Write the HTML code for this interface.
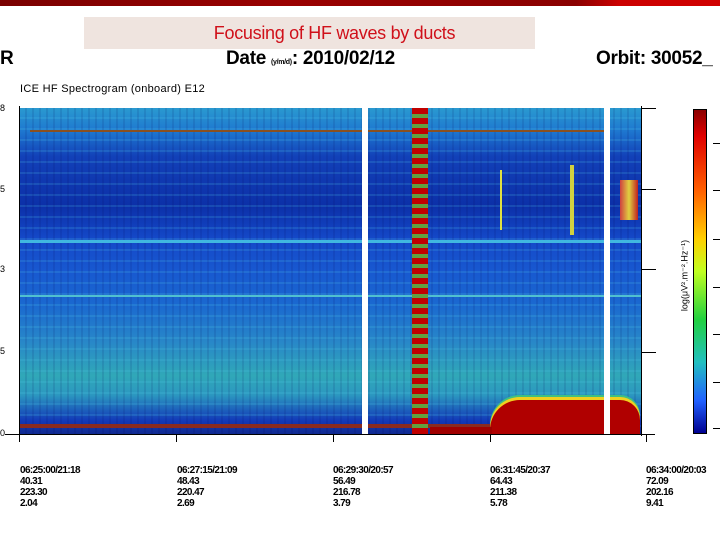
<!DOCTYPE html>
<html><head><style>
body{margin:0;width:720px;height:540px;background:#fff;position:relative;overflow:hidden;font-family:"Liberation Sans",sans-serif}
.a{position:absolute}
.t{font-size:10px;font-weight:bold;line-height:11px;letter-spacing:-0.6px}
</style></head><body>
<div class="a" style="left:0;top:0;width:720px;height:6px;background:linear-gradient(90deg,#7a0000,#9a0000 40%,#8a0000 80%,#cc0000 86%,#d00000)"></div>
<div class="a" style="left:84px;top:17px;width:451px;height:32px;background:#efe4df"></div>
<div class="a" style="left:84px;top:23px;width:451px;text-align:center;color:#d0101a;font-size:18px;padding-left:50px;box-sizing:border-box;letter-spacing:-0.3px">Focusing of HF waves by ducts</div>
<div class="a" style="left:0;top:48px;font-size:19px;font-weight:bold">R</div>
<div class="a" style="left:226px;top:48px;font-size:19px;font-weight:bold;letter-spacing:-0.3px">Date <span style="font-size:7px;font-weight:bold">(y/m/d)</span>: 2010/02/12</div>
<div class="a" style="left:596px;top:48px;font-size:19px;font-weight:bold;letter-spacing:-0.3px">Orbit: 30052_</div>
<div class="a" style="left:20px;top:83px;font-size:11px;letter-spacing:0.3px">ICE HF Spectrogram (onboard) E12</div>
<!-- spectrogram -->
<div class="a" style="left:20px;top:108px;width:622px;height:326px;background:linear-gradient(180deg,#2a9ad0 0%,#1e78d0 7%,#1240b8 15%,#0c30a8 30%,#1448c8 40%,#1858d0 50%,#1a68d0 60%,#2888c8 72%,#30a8b8 82%,#2c98c0 88%,#1238b8 96%,#102a90 100%)"></div>
<div class="a" style="left:20px;top:108px;width:622px;height:326px;background:repeating-linear-gradient(180deg,rgba(80,200,230,0) 0 9px,rgba(80,200,230,.3) 9px 11px);opacity:.6"></div>
<div class="a" style="left:20px;top:108px;width:622px;height:326px;background:repeating-linear-gradient(90deg,rgba(0,0,80,0) 0 5px,rgba(0,0,80,.1) 5px 7px)"></div>
<div class="a" style="left:30px;top:130px;width:580px;height:2px;background:#8a5020"></div>
<div class="a" style="left:20px;top:240px;width:622px;height:3px;background:#40b8e0"></div>
<div class="a" style="left:20px;top:295px;width:622px;height:2px;background:#50c0d0"></div>
<div class="a" style="left:20px;top:424px;width:470px;height:4px;background:#8a2a20"></div>
<div class="a" style="left:490px;top:400px;width:150px;height:34px;background:#b00000;border-radius:30px 20px 0 0;box-shadow:0 -3px 0 #f0d020, 0 -5px 0 #40c080"></div>
<div class="a" style="left:430px;top:427px;width:62px;height:7px;background:#a00000"></div>
<div class="a" style="left:412px;top:108px;width:16px;height:326px;background:repeating-linear-gradient(180deg,#c00000 0 6px,#60a040 6px 10px)"></div>
<div class="a" style="left:362px;top:108px;width:6px;height:326px;background:#fff"></div>
<div class="a" style="left:604px;top:108px;width:6px;height:326px;background:#fff"></div>
<div class="a" style="left:500px;top:170px;width:2px;height:60px;background:#e0e040"></div>
<div class="a" style="left:570px;top:165px;width:4px;height:70px;background:#d0d040"></div>
<div class="a" style="left:620px;top:180px;width:18px;height:40px;background:linear-gradient(90deg,#d04040,#e0d040,#c02020)"></div>
<!-- axes -->
<div class="a" style="left:19px;top:106px;width:1px;height:330px;background:#000"></div>
<div class="a" style="left:5px;top:434px;width:650px;height:1px;background:#000"></div>
<div class="a" style="left:641px;top:106px;width:1px;height:330px;background:#000"></div>
<div class="a" style="left:642px;top:108px;width:14px;height:1px;background:#000"></div>
<div class="a" style="left:642px;top:189px;width:14px;height:1px;background:#000"></div>
<div class="a" style="left:642px;top:269px;width:14px;height:1px;background:#000"></div>
<div class="a" style="left:642px;top:352px;width:14px;height:1px;background:#000"></div>
<div class="a" style="left:19px;top:434px;width:1px;height:8px;background:#000"></div>
<div class="a" style="left:176px;top:434px;width:1px;height:8px;background:#000"></div>
<div class="a" style="left:333px;top:434px;width:1px;height:8px;background:#000"></div>
<div class="a" style="left:490px;top:434px;width:1px;height:8px;background:#000"></div>
<div class="a" style="left:646px;top:434px;width:1px;height:8px;background:#000"></div>
<div class="a" style="left:0;top:103px;font-size:9px">8</div>
<div class="a" style="left:0;top:184px;font-size:9px">5</div>
<div class="a" style="left:0;top:264px;font-size:9px">3</div>
<div class="a" style="left:0;top:346px;font-size:9px">5</div>
<div class="a" style="left:0;top:428px;font-size:9px">0</div>
<!-- colorbar -->
<div class="a" style="left:693px;top:109px;width:12px;height:323px;border:1px solid #000;background:linear-gradient(180deg,#8a0000,#e00000 8%,#ff6000 25%,#ffd000 40%,#c0ff20 50%,#20d040 65%,#20c0c0 78%,#2060ff 90%,#000090)"></div>
<div class="a" style="left:640px;top:270px;width:90px;font-size:9px;transform:rotate(-90deg);transform-origin:center;white-space:nowrap;text-align:center">log(μV².m⁻².Hz⁻¹)</div>
<div class="a" style="left:713px;top:143px;width:7px;height:1px;background:#000"></div>
<div class="a" style="left:713px;top:190px;width:7px;height:1px;background:#000"></div>
<div class="a" style="left:713px;top:239px;width:7px;height:1px;background:#000"></div>
<div class="a" style="left:713px;top:287px;width:7px;height:1px;background:#000"></div>
<div class="a" style="left:713px;top:334px;width:7px;height:1px;background:#000"></div>
<div class="a" style="left:713px;top:382px;width:7px;height:1px;background:#000"></div>
<div class="a" style="left:713px;top:428px;width:7px;height:1px;background:#000"></div>
<!-- labels -->
<div class="a t" style="left:20px;top:465px">06:25:00/21:18<br>40.31<br>223.30<br>2.04</div>
<div class="a t" style="left:177px;top:465px">06:27:15/21:09<br>48.43<br>220.47<br>2.69</div>
<div class="a t" style="left:333px;top:465px">06:29:30/20:57<br>56.49<br>216.78<br>3.79</div>
<div class="a t" style="left:490px;top:465px">06:31:45/20:37<br>64.43<br>211.38<br>5.78</div>
<div class="a t" style="left:646px;top:465px">06:34:00/20:03<br>72.09<br>202.16<br>9.41</div>
</body></html>
